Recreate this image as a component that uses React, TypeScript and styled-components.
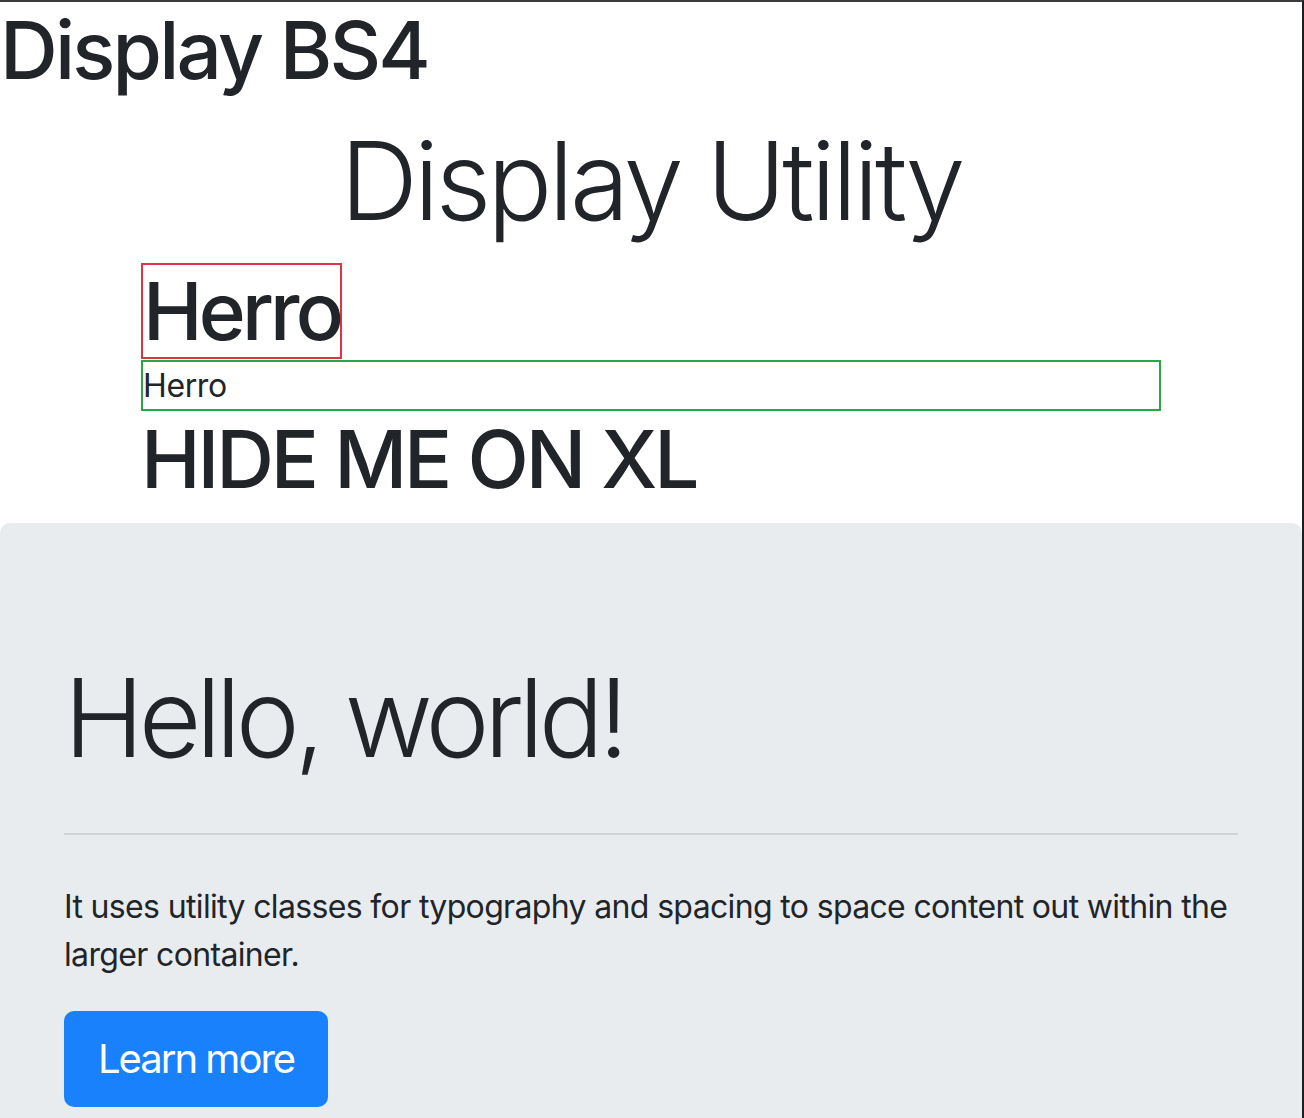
import React from "react";
import styled, { createGlobalStyle } from "styled-components";

const GlobalStyle = createGlobalStyle`
  html, body {
    margin: 0;
    padding: 0;
    background: #ffffff;
  }
  body {
    font-family: Inter, "Noto Sans", "Liberation Sans", sans-serif;
    color: #212529;
    line-height: 1.5;
  }
  *, *::before, *::after {
    box-sizing: border-box;
  }
`;

const Frame = styled.div`
  width: 1304px;
  height: 1118px;
  overflow: hidden;
  border-top: 2px solid #3b3c3e;
  border-right: 2px solid #1d1e20;
  background: #ffffff;
`;

const PageTitle = styled.h1`
  margin: 0 0 16px;
  font-size: 80px;
  font-weight: 500;
  line-height: 96px;
  letter-spacing: -2.8px;
`;

const Container = styled.div`
  width: 1080px;
  margin: 0 auto;
  padding: 0 30px;
`;

// display-4 style heading, tracking differs a little per use
const DisplayHeading = styled.h1<{ $align?: string; $tracking?: number }>`
  margin: 0 0 15px;
  font-size: 108px;
  font-weight: 300;
  line-height: 134px;
  letter-spacing: ${(p) => p.$tracking ?? -3.8}px;
  text-align: ${(p) => p.$align || "left"};
`;

const OutlinedHeading = styled.h1`
  display: inline-block;
  vertical-align: top;
  margin: 0 0 1px;
  border: 2px solid #dc3545;
  font-size: 80px;
  font-weight: 500;
  line-height: 92px;
  letter-spacing: -3.8px;
`;

const OutlinedBlock = styled.div`
  border: 2px solid #28a745;
  font-size: 32px;
  line-height: 47px;
  letter-spacing: -0.4px;
`;

const Heading = styled.h1`
  margin: 0 0 16px;
  font-size: 80px;
  font-weight: 500;
  line-height: 96px;
  letter-spacing: -3.1px;
`;

const Jumbotron = styled.section`
  background: #e9ecef;
  border-radius: 10px;
  padding: 128px 64px;
`;

const Rule = styled.hr`
  margin: 48px 0;
  border: 0;
  border-top: 2px solid rgba(0, 0, 0, 0.1);
`;

const Text = styled.p`
  margin: 0 0 32px;
  font-size: 32px;
  line-height: 48px;
  letter-spacing: -0.65px;
`;

const Button = styled.a`
  display: inline-block;
  padding: 16px 32px;
  border: 2px solid #1881fb;
  border-radius: 10px;
  background: #1881fb;
  color: #ffffff;
  font-size: 40px;
  line-height: 60px;
  letter-spacing: -2px;
  text-decoration: none;
`;

export default function App() {
  return (
    <Frame>
      <GlobalStyle />
      <PageTitle>Display BS4</PageTitle>
      <Container>
        <DisplayHeading $align="center">Display Utility</DisplayHeading>
        <OutlinedHeading>Herro</OutlinedHeading>
        <OutlinedBlock>Herro</OutlinedBlock>
        <Heading>HIDE ME ON XL</Heading>
      </Container>
      <Jumbotron>
        <DisplayHeading $tracking={-5.3}>Hello, world!</DisplayHeading>
        <Rule />
        <Text>
          It uses utility classes for typography and spacing to space content
          out within the larger container.
        </Text>
        <Button href="#">Learn more</Button>
      </Jumbotron>
    </Frame>
  );
}
